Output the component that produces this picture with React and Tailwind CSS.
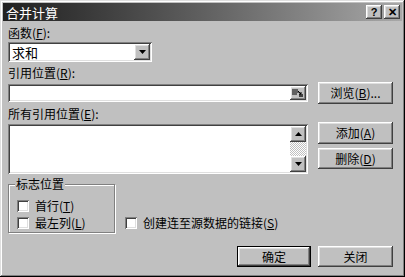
const raised =
  'shadow-[inset_-1px_-1px_#404040,inset_1px_1px_#ffffff,inset_-2px_-2px_#808080,inset_2px_2px_#dfdfdf]';
const sunken =
  'shadow-[inset_1px_1px_#808080,inset_-1px_-1px_#ffffff,inset_2px_2px_#404040,inset_-2px_-2px_#dfdfdf]';

function Btn({ children, isDefault, className = '' }) {
  return (
    <div
      className={`flex items-center justify-center bg-[#c0c0c0] text-[12px] text-black ${
        isDefault ? 'border border-black' : ''
      } ${className}`}
    >
      <div className={`w-full h-full flex items-center justify-center ${raised}`}>{children}</div>
    </div>
  );
}

function Check({ children, className = '' }) {
  return (
    <div className={`flex items-center gap-[6px] ${className}`}>
      <div className={`w-[12px] h-[12px] bg-white ${sunken}`} />
      <span>{children}</span>
    </div>
  );
}

function Arrow({ up }) {
  return (
    <svg width="7" height="4" viewBox="0 0 7 4">
      {up ? <path d="M3.5 0 L7 4 L0 4 Z" fill="#000" /> : <path d="M0 0 L7 0 L3.5 4 Z" fill="#000" />}
    </svg>
  );
}

export default function App() {
  return (
    <div
      className="w-[405px] h-[277px] bg-[#c0c0c0] p-[3px] text-[12px] leading-none text-black shadow-[inset_-1px_-1px_#000,inset_1px_1px_#dfdfdf,inset_-2px_-2px_#808080,inset_2px_2px_#fff]"
      style={{ fontFamily: '"Noto Sans CJK SC", "Liberation Sans", sans-serif' }}
    >
      {/* Title bar */}
      <div className="h-[18px] flex items-center justify-between pl-[3px] pr-[2px] bg-gradient-to-r from-[#202020] via-[#606060] to-[#a8a8a8]">
        <span className="text-white text-[13px] leading-none">合并计算</span>
        <div className="flex gap-[2px]">
          <Btn className="w-[16px] h-[14px]">
            <span className="text-[11px] font-bold leading-none" style={{ fontFamily: '"Liberation Sans", sans-serif' }}>?</span>
          </Btn>
          <Btn className="w-[16px] h-[14px]">
            <span className="text-[11px] font-bold leading-none" style={{ fontFamily: '"Liberation Sans", sans-serif' }}>✕</span>
          </Btn>
        </div>
      </div>

      <div className="pl-[5px] pr-[8px]">
        <div className="mt-[6px] h-[12px]">
          函数(<u>F</u>):
        </div>
        {/* Combo */}
        <div className={`mt-[3px] w-[144px] h-[20px] bg-white flex items-center p-[2px] ${sunken}`}>
          <span className="flex-1 pl-[2px] text-[13px]">求和</span>
          <Btn className="w-[16px] h-[16px]">
            <Arrow />
          </Btn>
        </div>

        <div className="mt-[5px] h-[12px]">
          引用位置(<u>R</u>):
        </div>
        <div className="flex items-center justify-between mt-[3px]">
          <div className={`w-[300px] h-[18px] bg-white flex justify-end items-center p-[2px] ${sunken}`}>
            <Btn className="w-[16px] h-[14px]">
              <svg width="12" height="9" viewBox="0 0 12 9">
                <path d="M0 1 H6 M0 3 H7 M0 5 H5" stroke="#000" strokeWidth="1" />
                <rect x="7" y="5" width="4" height="3" fill="#404040" />
                <path d="M6 2 L9 5 M9 3 V5 H7" stroke="#000" strokeWidth="1" fill="none" />
              </svg>
            </Btn>
          </div>
          <Btn className="w-[75px] h-[22px] mr-[1px]">浏览(<u>B</u>)...</Btn>
        </div>

        <div className="mt-[4px] h-[12px]">
          所有引用位置(<u>E</u>):
        </div>
        <div className="flex justify-between mt-[4px]">
          <div className={`w-[300px] h-[50px] bg-white flex justify-end p-[2px] ${sunken}`}>
            <div className="w-[16px] h-full flex flex-col">
              <Btn className="w-[16px] h-[16px]">
                <Arrow up />
              </Btn>
              <div className="flex-1 bg-[repeating-conic-gradient(#ffffff_0%_25%,#c0c0c0_0%_50%)] bg-[length:2px_2px]" />
              <Btn className="w-[16px] h-[16px]">
                <Arrow />
              </Btn>
            </div>
          </div>
          <div className="flex flex-col gap-[4px] mr-[1px] -mt-[2px]">
            <Btn className="w-[75px] h-[22px]">添加(<u>A</u>)</Btn>
            <Btn className="w-[75px] h-[21px]">删除(<u>D</u>)</Btn>
          </div>
        </div>

        <div className="flex items-end mt-[5px]">
          <div className="relative w-[107px] h-[49px] border border-[#808080] shadow-[1px_1px_#fff,inset_1px_1px_#fff] mt-[5px]">
            <span className="absolute -top-[7px] left-[6px] bg-[#c0c0c0] px-[1px] leading-none">标志位置</span>
            <Check className="absolute left-[8px] top-[15px]">
              首行(<u>T</u>)
            </Check>
            <Check className="absolute left-[8px] top-[32px]">
              最左列(<u>L</u>)
            </Check>
          </div>
          <Check className="ml-[10px] mb-[4px]">
            创建连至源数据的链接(<u>S</u>)
          </Check>
        </div>

        <div className="flex justify-end gap-[7px] mt-[13px] mr-[1px]">
          <Btn isDefault className="w-[74px] h-[21px]">确定</Btn>
          <Btn className="w-[75px] h-[21px]">关闭</Btn>
        </div>
      </div>
    </div>
  );
}
